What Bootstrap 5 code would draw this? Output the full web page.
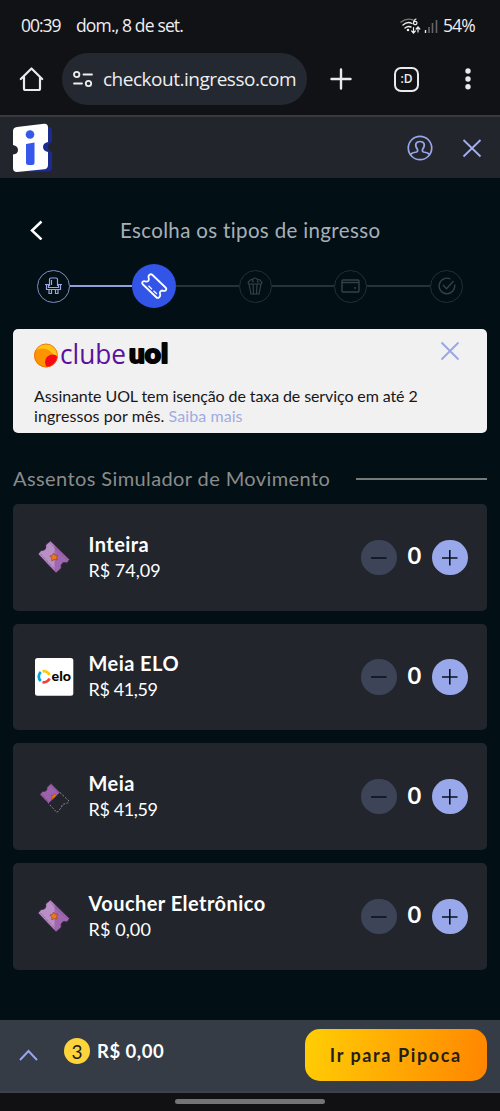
<!DOCTYPE html>
<html lang="pt-BR">
<head>
<meta charset="utf-8">
<meta name="viewport" content="width=device-width, initial-scale=1">
<title>Ingresso.com - Tipos de ingresso</title>
<link href="https://cdn.jsdelivr.net/npm/bootstrap@5.3.0/dist/css/bootstrap.min.css" rel="stylesheet">
<style>
body{background:#020f15;font-family:Lato,"Liberation Sans",sans-serif;color:#fff;width:500px;height:1111px;overflow:hidden;line-height:1}
svg{display:block;flex:none}
.chrome{background:#111216;height:117px;border-bottom:2px solid #393940;font-family:"Open Sans","Noto Sans",sans-serif;color:#eeeef1}
.status{height:51px;padding:0 25px 0 21px;font-size:17.5px}
.tools{height:52px;padding:0 22px 0 19px;margin-top:2px}
.url{background:#242830;width:245px;height:52px;border-radius:26px;padding-left:11px;margin-left:17px;font-size:19px}
.site-head{background:#22252c;height:61px;padding:0 18px 0 12px}
.back-row{height:50px;margin-top:27px;padding-left:29px}
.page-title{font-size:20.5px;color:#a7afb8;width:265px;margin-left:76px}
.steps{height:44px;margin-top:9px;padding:0 37px 0 36.5px}
.step{width:33px;height:33px;border-radius:50%;border:1px solid #242f38;color:#36414a;flex:none}
.step.done{border-color:#7f8dc4;color:#98a6e6}
.step.now{width:44px;height:44px;border:0;background:#3254e7;color:#fff}
.wire{height:1.5px;background:#27323b;flex:1 1 0}
.wire.done{background:#929fdc}
.promo{background:#f1f1f1;height:104px;border-radius:5px;margin:21px 13px 0;padding:9px 27px 0 21px;color:#17171a}
.promo-text{font-size:16px;line-height:20px;margin-top:13.5px;white-space:nowrap}
.link-soft{color:#a0abe3}
.section{margin:34px 13px 0;height:22px;color:#8b8c8c;font-size:20px}
.rule{width:131px;height:2px;background:#767a79;margin-top:2px}
.tickets{margin:15px 13px 0;gap:13.1px}
.ticket{background:#22252c;height:106.6px;border-radius:5px;padding:0 19.5px 0 21px}
.pic{width:40px;height:40px;margin-right:14.5px}
.name{font-size:20px;font-weight:700;height:25px;line-height:24px;white-space:nowrap;letter-spacing:.45px}
.price{font-size:18px;height:26px;line-height:26px;white-space:nowrap}
.rnd{width:35.5px;height:35.5px;border-radius:50%;border:0;padding:0}
.minus{background:#3d4458}.plus{background:#99a7eb}
.qty{width:35.5px;text-align:center;font:700 22px/1 Lato,sans-serif;padding-bottom:2px}
.digit{display:inline-block;transform:scaleX(1.08)}
.buy{background:#353c46;height:73px;margin-top:50.2px;border-bottom:2px solid #3d434d;padding:0 13px 0 18px}
.coin{width:26px;height:26px;border-radius:50%;background:#ffd43a;color:#1b1d20;font-size:19px;margin-left:25px}
.total{font-size:18.5px;font-weight:700;margin-left:7px;letter-spacing:.5px}
.go{width:182.5px;height:52px;border:0;border-radius:15px;background:linear-gradient(100deg,#ffce05,#ff8500);color:#231f1c;font-weight:700;font-size:18px;padding:0}
.sysbar{background:#111114;height:18px}
.grip{width:150px;height:5px;border-radius:3px;background:#747476}
.t{white-space:nowrap;display:inline-block}
</style>
</head>
<body>
<svg width="0" height="0" class="position-absolute">
  <symbol id="ticket" viewBox="0 0 40 40">
    <g stroke="#3b2942" stroke-width=".8" stroke-linejoin="round">
      <path fill="#9e67af" d="M16.500 4 L35.500 22.500 L33 26 Q28 24 27 29 Q28 31 26 32.500 L22 36 L4 17 L7 13.500 Q12 14 12 9.500 Q11 8 12.500 7 Z"/>
      <path fill="#b890c5" stroke="none" d="M16.500 4.800 L20.500 8.800 V33.600 L4.800 17 L7.500 14 Q12.700 14 12.500 9 L12.500 8 Z"/>
      <path fill="none" stroke="#71447f" stroke-width=".7" stroke-dasharray="1 1" d="M16.500 6.500 L33.500 23 M6.500 17 L22 33.500"/>
    </g>
    <path fill="#ef7718" stroke="#9b4522" stroke-width=".7" d="M19.500 16 L21 18.200 L23.800 18.200 L22.500 20.500 L23.300 23 L20.200 22.500 L17.800 24 L17.700 21 L15.800 19 L18.600 18.300Z"/>
  </symbol>
</svg>

<div class="chrome">
  <div class="status d-flex align-items-center">
    <span class="t" style="letter-spacing:-1px;width:55px">00:39</span><span class="t" style="letter-spacing:-.85px">dom., 8 de set.</span>
    <div class="ms-auto d-flex align-items-center">
      <svg width="39" height="18" viewBox="0 0 39 18" fill="none" stroke="#eee" stroke-width="1.400" stroke-linecap="round">
        <path stroke="#777" d="M1 5Q7 .5 13 3"/><path d="M3 8Q7.500 4 12 6.500M5 11Q8 8.500 11 10"/><circle cx="8" cy="13" r=".6"/>
        <path stroke-width="1.200" d="M16 2Q13.500 3 13.500 6M13.500 6a1.700 1.700 0 1 0 3.400 0a1.700 1.700 0 1 0-3.400 0M13.500 10.500v5M11.700 14l1.800 2 1.800-2M18 15v-4.500M16.200 12l1.800-2 1.800 2"/>
        <path stroke-linecap="butt" d="M25.500 13v3"/><path stroke="#666" stroke-linecap="butt" stroke-width="1.600" d="M29 10v6M32.500 6v10M36.500 3v13"/>
      </svg>
      <span class="t ms-1" style="letter-spacing:-.8px">54%</span>
    </div>
  </div>
  <div class="tools d-flex align-items-center">
    <svg width="26" height="26" viewBox="0 0 26 26" fill="none" stroke="#e9e9ee" stroke-width="2.200" stroke-linejoin="round" stroke-linecap="round"><path d="M1.800 13L12.500 2.500 23.200 13M5 11V22.500Q5 24 6.500 24H19.500Q21 24 21 22.500V11"/></svg>
    <div class="url d-flex align-items-center">
      <svg width="20" height="18" viewBox="0 0 20 18" fill="none" stroke="#eee" stroke-width="1.800" stroke-linecap="round"><circle cx="3.700" cy="4.500" r="2.700"/><path d="M10.500 4.500H19M1 13.500H9"/><circle cx="15.500" cy="13.500" r="2.700"/></svg>
      <span class="t" style="margin-left:10px;letter-spacing:-.48px">checkout.ingresso.com</span>
    </div>
    <svg style="margin-left:23px" width="22" height="22" viewBox="0 0 22 22" stroke="#e9e9ee" stroke-width="2.400" stroke-linecap="round"><path d="M11 1.500v19M1.500 11h19"/></svg>
    <div class="d-flex align-items-center justify-content-center" style="width:25px;height:25px;border:2px solid #e9e9ee;border-radius:7px;margin-left:42px;font-size:12px;font-weight:600">:D</div>
    <svg class="ms-auto" width="20" height="24" fill="#e9e9ee"><circle cx="10" cy="4" r="2.700"/><circle cx="10" cy="12" r="2.700"/><circle cx="10" cy="19.800" r="2.700"/></svg>
  </div>
</div>

<header class="site-head d-flex align-items-center">
  <svg width="41" height="50" viewBox="0 0 41 50">
    <path fill="#1b2c8e" d="M32 4.500L36 4Q40 4 40 8V19Q36 21 36 24T40 30V44Q40 48.500 36 48.500L9 49 2 46Z"/>
    <path fill="#fff" d="M5 4L32 .8Q36 .5 36 4.500V19Q31 20 31 24T36 29V42Q36 46 32 46.300L5 49Q1 49 1 45V31.500Q6 31 6 27T1 22V8Q1 4.500 5 4Z"/>
    <circle cx="18" cy="11.500" r="4.300" fill="#3557ec"/><path fill="#3557ec" d="M14 21L22.500 19.500V39.500Q22.500 42 20 42H16.500Q14 42 14 39.500Z"/>
  </svg>
  <svg class="ms-auto" width="26" height="26" viewBox="0 0 26 26" fill="none" stroke="#98a6ea" stroke-width="1.700"><circle cx="13" cy="13" r="11.700"/><path d="M3.500 19.500Q5 17.500 9.500 17Q11 16.500 10.500 14.500Q8 11 9 8.500Q10 6.500 13 6.500T17 8.500Q18 11 15.500 14.500Q15 16.500 16.500 17Q21 17.500 22.500 19.500"/></svg>
  <svg style="margin-left:29px" width="20" height="20" viewBox="0 0 20 20" stroke="#a3aff0" stroke-width="1.800"><path d="M1.500 2L18.500 18.500M18.500 2L1.500 18.500"/></svg>
</header>

<div class="back-row d-flex align-items-center">
  <svg width="15" height="20" viewBox="0 0 15 20" fill="none" stroke="#fff" stroke-width="2.500"><path d="M12.500 1.500L3 10.500 12.500 19.500"/></svg>
  <span class="page-title t" style="letter-spacing:.35px">Escolha os tipos de ingresso</span>
</div>

<div class="steps d-flex align-items-center">
  <div class="step done d-flex align-items-center justify-content-center"><svg width="19" height="18" viewBox="0 0 19 18" fill="none" stroke="currentColor" stroke-width="1.200"><path d="M5.500 9V2.500Q5.500 1 7 1H12Q13.500 1 13.500 2.500V9M7.500 3V8M1 7.500H4.500V10.500H14.500V7.500H18M2.500 8V12.500H16.500V8M5 13V16.500H7.500V13M11.500 13V16.500H14V13"/></svg></div>
  <div class="wire done"></div>
  <div class="step now d-flex align-items-center justify-content-center"><svg width="28" height="28" viewBox="0 0 28 28" fill="none" stroke="currentColor" stroke-width="1.800" stroke-linejoin="round"><path d="M12.500 3L25.500 15.500Q27 17 25.700 18.300Q24.500 19.500 22.500 18.500Q19.500 19 20 21.500Q20.800 24 19 25.500Q17.500 26.500 16 25L3 12.500Q1.500 11 2.800 9.700Q4 8.500 6 9.700Q9.500 9.500 8.700 6Q8 4 9.500 2.800Q11 1.600 12.500 3Z"/><path stroke-width="1.200" d="M8.500 13.800L12 17.200M13.500 18.700L17 22"/></svg></div>
  <div class="wire"></div>
  <div class="step d-flex align-items-center justify-content-center"><svg width="16" height="18" viewBox="0 0 16 18" fill="none" stroke="currentColor" stroke-width="1.200"><path d="M2 7L4 17H12L14 7ZM6 7L6.500 17M10 7L9.500 17M2 7Q0 5 2.500 4Q3.500 2 5.500 3Q6 .8 8 1T10.500 3Q13 2 13.500 4Q16 5 14 7M5 5L7 4M10 4L11.500 5.500"/></svg></div>
  <div class="wire"></div>
  <div class="step d-flex align-items-center justify-content-center"><svg width="19" height="14" viewBox="0 0 19 14" fill="none" stroke="currentColor" stroke-width="1.400"><rect x="1" y="1" width="17" height="12" rx="1"/><path d="M1 3.500H18" /><circle cx="14" cy="9" r=".4"/></svg></div>
  <div class="wire"></div>
  <div class="step d-flex align-items-center justify-content-center"><svg width="18" height="18" viewBox="0 0 18 18" fill="none" stroke="currentColor" stroke-width="1.400"><path d="M12.500 2A7.800 7.800 0 1 0 16.600 7.500M5 8L8.500 11.800 15.500 4"/></svg></div>
</div>

<div class="promo">
  <div class="d-flex align-items-center">
    <svg width="140" height="34" viewBox="0 0 140 34" overflow="visible">
      <defs><clipPath id="ball"><circle cx="12" cy="17.500" r="11.700"/></clipPath></defs>
      <g clip-path="url(#ball)"><path fill="#ffc414" d="M0 4h25v26H0z"/><circle cx="8.500" cy="22.500" r="12" fill="#ff9200"/><circle cx="18.500" cy="24" r="7.500" fill="#f80716"/></g>
      <circle cx="12" cy="17.500" r="11.500" fill="none" stroke="#ed5a12" stroke-width=".7"/>
      <text x="26" y="26" font-family="Open Sans" font-weight="400" font-size="27.500" fill="#5b10a0" textLength="66" lengthAdjust="spacingAndGlyphs">clube</text>
      <text x="95" y="25" font-family="Lato" font-weight="900" font-size="26" fill="#050505" stroke="#050505" stroke-width="2" stroke-linejoin="round" textLength="39" lengthAdjust="spacingAndGlyphs">uol</text>
    </svg>
    <svg class="ms-auto" width="20" height="20" viewBox="0 0 20 20" style="margin-bottom:9px" stroke="#98a7e6" stroke-width="1.900"><path d="M1.500 1.500L18.500 18.500M18.500 1.500L1.500 18.500"/></svg>
  </div>
  <div class="promo-text"><span class="t" style="letter-spacing:-.1px">Assinante UOL tem isenção de taxa de serviço em até 2</span><br><span class="t" style="letter-spacing:.08px">ingressos por mês. <span class="link-soft">Saiba mais</span></span></div>
</div>

<div class="section d-flex align-items-center justify-content-between"><span class="t" style="letter-spacing:.4px">Assentos Simulador de Movimento</span><div class="rule"></div></div>

<main class="tickets d-flex flex-column">
  <div class="ticket d-flex align-items-center">
    <div class="pic"><svg width="40" height="40"><use href="#ticket"/></svg></div>
    <div><div class="name"><span class="t">Inteira</span></div><div class="price"><span class="t">R$ 74,09</span></div></div>
    <div class="ms-auto d-flex align-items-center"><button class="rnd minus"><svg width="35.500" height="35.500" stroke="#07151e" stroke-width="1.600"><path d="M10 18H25.500"/></svg></button><div class="qty"><span class="digit">0</span></div><button class="rnd plus"><svg width="35.500" height="35.500" stroke="#07151e" stroke-width="1.600"><path d="M10 18H25.500M17.800 10V25.500"/></svg></button></div>
  </div>
  <div class="ticket d-flex align-items-center">
    <div class="pic"><svg width="40" height="40" viewBox="0 0 40 40"><rect x="1" y="1" width="38.300" height="37.800" rx="2.500" fill="#fff"/><g fill="none" stroke-width="2.800"><path stroke="#00a2df" d="M6.800 15A6 6 0 0 0 6.800 24"/><path stroke="#ffcb08" d="M8.500 14.500A5.800 5.800 0 0 1 15.500 18"/><path stroke="#ef4135" d="M8.500 25A5.800 5.800 0 0 0 15.500 21.500"/></g><text x="17.500" y="24" font-family="Lato" font-weight="900" font-size="13" fill="#050505" textLength="19.500" lengthAdjust="spacingAndGlyphs">elo</text></svg></div>
    <div><div class="name"><span class="t">Meia ELO</span></div><div class="price"><span class="t" style="letter-spacing:-.4px">R$ 41,59</span></div></div>
    <div class="ms-auto d-flex align-items-center"><button class="rnd minus"><svg width="35.500" height="35.500" stroke="#07151e" stroke-width="1.600"><path d="M10 18H25.500"/></svg></button><div class="qty"><span class="digit">0</span></div><button class="rnd plus"><svg width="35.500" height="35.500" stroke="#07151e" stroke-width="1.600"><path d="M10 18H25.500M17.800 10V25.500"/></svg></button></div>
  </div>
  <div class="ticket d-flex align-items-center">
    <div class="pic"><svg width="40" height="40" viewBox="0 0 40 40"><path fill="#9c62ad" stroke="#3b2942" stroke-width=".7" d="M17 6.500L26 15.500 14.500 26.500 6 17.500 8.500 14.500Q13.500 15 13 10.500Z"/><path fill="none" stroke="#6f407c" stroke-width=".8" stroke-dasharray="1 1" d="M17 8.500L24.500 16M8 17.500L15 25"/><path fill="#ef7718" stroke="#9b4522" stroke-width=".6" d="M22.500 18.500L17.500 23 18 20 17 18.500 19.500 18.500 20.500 16.500Z"/><path fill="none" stroke="#9a9b9e" stroke-width=".9" stroke-dasharray="2 1.500" d="M26 15.500L35 24 32.500 27Q28 26 27.500 30.500L23 35.500 14.500 26.500"/></svg></div>
    <div><div class="name"><span class="t">Meia</span></div><div class="price"><span class="t" style="letter-spacing:-.4px">R$ 41,59</span></div></div>
    <div class="ms-auto d-flex align-items-center"><button class="rnd minus"><svg width="35.500" height="35.500" stroke="#07151e" stroke-width="1.600"><path d="M10 18H25.500"/></svg></button><div class="qty"><span class="digit">0</span></div><button class="rnd plus"><svg width="35.500" height="35.500" stroke="#07151e" stroke-width="1.600"><path d="M10 18H25.500M17.800 10V25.500"/></svg></button></div>
  </div>
  <div class="ticket d-flex align-items-center">
    <div class="pic"><svg width="40" height="40"><use href="#ticket"/></svg></div>
    <div><div class="name"><span class="t">Voucher Eletrônico</span></div><div class="price"><span class="t" style="letter-spacing:.1px">R$ 0,00</span></div></div>
    <div class="ms-auto d-flex align-items-center"><button class="rnd minus"><svg width="35.500" height="35.500" stroke="#07151e" stroke-width="1.600"><path d="M10 18H25.500"/></svg></button><div class="qty"><span class="digit">0</span></div><button class="rnd plus"><svg width="35.500" height="35.500" stroke="#07151e" stroke-width="1.600"><path d="M10 18H25.500M17.800 10V25.500"/></svg></button></div>
  </div>
</main>

<footer>
  <div class="buy d-flex align-items-center">
    <svg width="21" height="14" viewBox="0 0 21 14" fill="none" stroke="#98a6ea" stroke-width="2"><path d="M2 12L10.500 3 19 12"/></svg>
    <div class="coin d-flex align-items-center justify-content-center mb-2">3</div>
    <span class="total t mb-2">R$ 0,00</span>
    <button class="go ms-auto"><span class="t" style="letter-spacing:1.600px">Ir para Pipoca</span></button>
  </div>
  <div class="sysbar d-flex align-items-center justify-content-center"><div class="grip"></div></div>
</footer>
<script src="https://cdn.jsdelivr.net/npm/bootstrap@5.3.0/dist/js/bootstrap.bundle.min.js"></script>
</body>
</html>
